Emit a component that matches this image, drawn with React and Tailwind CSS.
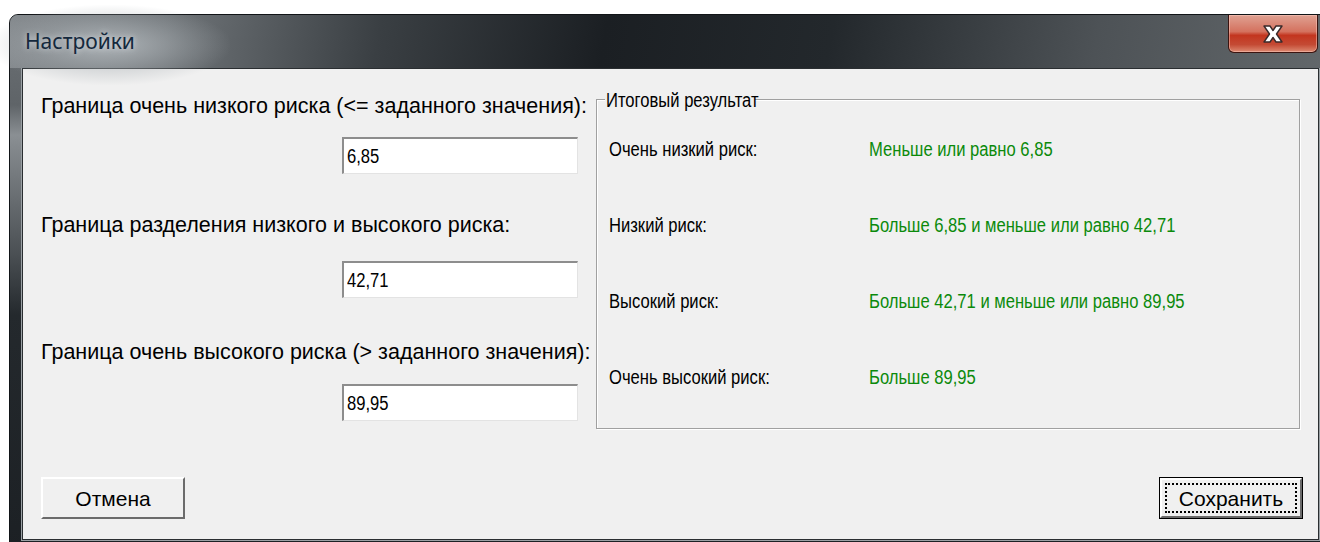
import React from "react";

const FONT = { fontFamily: '"Liberation Sans", Arial, sans-serif' };

// Condensed text run: the dialog's UI font is narrower than Arial
function Narrow({ children, className = "" }) {
  return <span className={"inline-block whitespace-nowrap origin-left scale-x-[0.83] " + className}>{children}</span>;
}

function TextBox({ value }) {
  return (
    <div className="w-[236px] h-[37px] bg-white border-t-2 border-l-2 border-t-[#8d8d8d] border-l-[#8d8d8d] border-b border-r border-b-[#e3e3e3] border-r-[#e3e3e3] flex items-center pl-[3px] text-[20px] text-black leading-none">
      <Narrow>{value}</Narrow>
    </div>
  );
}

function ClassicButton({ label, isDefault }) {
  if (isDefault) {
    return (
      <div className="w-[144px] h-[42px] border border-black">
        <div className="w-full h-full border-t-2 border-l-2 border-t-white border-l-white border-b-2 border-r-2 border-b-[#6b6b6b] border-r-[#6b6b6b] bg-[#f0f0f0] p-[3px]">
          <div className="w-full h-full border-2 border-dotted border-black flex items-center justify-center text-[21px] text-black leading-none">
            {label}
          </div>
        </div>
      </div>
    );
  }
  return (
    <div className="w-[144px] h-[42px] border-t-2 border-l-2 border-t-white border-l-white border-b-2 border-r-2 border-b-[#6b6b6b] border-r-[#6b6b6b] bg-[#f0f0f0] flex items-center justify-center text-[21px] text-black leading-none">
      {label}
    </div>
  );
}

function ResultRow({ label, value }) {
  return (
    <div className="flex items-center h-[24px]">
      <span className="w-[260px] text-black"><Narrow>{label}</Narrow></span>
      <span className="text-[#0b8a0b]"><Narrow>{value}</Narrow></span>
    </div>
  );
}

export default function App() {
  return (
    <div className="w-[1320px] h-[542px] bg-white overflow-hidden pl-[9px] pt-[14px]">
      {/* window frame */}
      <div className="w-[1323px] h-[540px] rounded-t-[9px] border border-[#111417] bg-[linear-gradient(180deg,#6d7276_0px,#5f6468_90px,#8a8f93_120px,#4a4f53_240px,#24292d_300px,#1c2024_540px)] flex flex-col">
        {/* title bar */}
        <div className="h-[53px] flex items-start relative rounded-t-[8px] bg-[linear-gradient(100deg,#868b8f_0%,#6f7478_12%,#3a3f43_28%,#1b1f23_45%,#23282c_62%,#4d5256_82%,#63686b_100%)]">
          <div className="absolute left-[-20px] top-[-10px] w-[240px] h-[80px] rounded-full bg-[radial-gradient(ellipse_at_center,rgba(190,196,200,0.75)_0%,rgba(170,176,180,0.35)_45%,rgba(150,156,160,0)_72%)]" />
          <div
            className="relative pl-[15px] pt-[16px] text-[21px] leading-none text-[#14283c]"
            style={{ fontFamily: '"Noto Sans", "Open Sans", sans-serif', textShadow: "0 0 6px rgba(230,235,240,0.9)" }}
          >
            Настройки
          </div>
          <div className="ml-auto mr-[13px] w-[90px] h-[38px] rounded-b-[6px] border border-[#3b1410] border-t-0 bg-[linear-gradient(180deg,#e0a293_0%,#d4715e_45%,#c3351f_55%,#c44a34_80%,#dd8a72_100%)] flex items-center justify-center shadow-[inset_0_0_0_1px_rgba(255,210,200,0.45)]">
            <svg width="30" height="22" viewBox="0 0 30 22">
              <path d="M6 3 L12 3 L15 7.5 L18 3 L24 3 L18.5 11 L24 19 L18 19 L15 14.5 L12 19 L6 19 L11.5 11 Z" fill="#ffffff" stroke="#3a2a2a" strokeWidth="1.4" strokeLinejoin="round" />
            </svg>
          </div>
        </div>
        {/* client area */}
        <div className="ml-[12px] w-[1297px] h-[472px] border border-[#2a2e31] shadow-[0_0_0_1px_#9aa0a4]">
          <div className="w-full h-full bg-[#f0f0f0] text-[21.5px] leading-none flex flex-col text-black" style={FONT}>
            <div className="flex">
              {/* threshold inputs */}
              <div className="w-[573px] pl-[18px] flex flex-col">
                <div className="mt-[26px] h-[24px] flex items-center whitespace-nowrap">Граница очень низкого риска (&lt;= заданного значения):</div>
                <div className="mt-[18px] ml-[301px]"><TextBox value="6,85" /></div>
                <div className="mt-[40px] h-[24px] flex items-center whitespace-nowrap">Граница разделения низкого и высокого риска:</div>
                <div className="mt-[23px] ml-[301px]"><TextBox value="42,71" /></div>
                <div className="mt-[43px] h-[24px] flex items-center whitespace-nowrap">Граница очень высокого риска (&gt; заданного значения):</div>
                <div className="mt-[19px] ml-[301px]"><TextBox value="89,95" /></div>
              </div>
              {/* summary group */}
              <div className="mt-[30px] w-[704px] h-[330px] border border-[#a0a0a0] shadow-[inset_1px_1px_0_#ffffff,1px_1px_0_#ffffff] relative flex flex-col pl-[12px] pt-[37px] gap-[52px] text-[20px]">
                <span className="absolute left-[8px] top-[-12px] px-[1px] bg-[#f0f0f0] h-[24px] w-[150px] flex items-center"><Narrow>Итоговый результат</Narrow></span>
                <ResultRow label="Очень низкий риск:" value="Меньше или равно 6,85" />
                <ResultRow label="Низкий риск:" value="Больше 6,85 и меньше или равно 42,71" />
                <ResultRow label="Высокий риск:" value="Больше 42,71 и меньше или равно 89,95" />
                <ResultRow label="Очень высокий риск:" value="Больше 89,95" />
              </div>
            </div>
            {/* dialog buttons */}
            <div className="mt-auto mb-[20px] flex justify-between pl-[18px] pr-[15px]">
              <ClassicButton label="Отмена" />
              <ClassicButton label="Сохранить" isDefault />
            </div>
          </div>
        </div>
      </div>
    </div>
  );
}
